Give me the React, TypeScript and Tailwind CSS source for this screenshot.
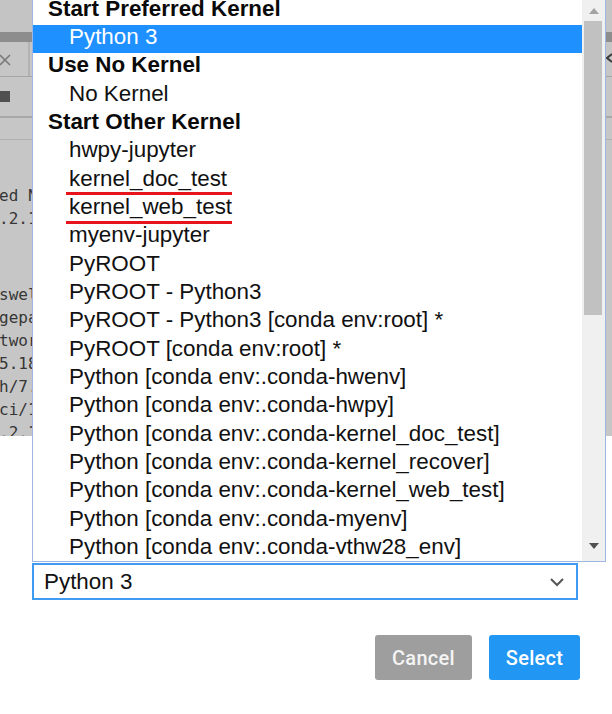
import React from "react";

const items: { label: string; header?: boolean; selected?: boolean; mark?: number }[] = [
  { label: "Start Preferred Kernel", header: true },
  { label: "Python 3", selected: true },
  { label: "Use No Kernel", header: true },
  { label: "No Kernel" },
  { label: "Start Other Kernel", header: true },
  { label: "hwpy-jupyter" },
  { label: "kernel_doc_test", mark: 25 },
  { label: "kernel_web_test", mark: 26 },
  { label: "myenv-jupyter" },
  { label: "PyROOT" },
  { label: "PyROOT - Python3" },
  { label: "PyROOT - Python3 [conda env:root] *" },
  { label: "PyROOT [conda env:root] *" },
  { label: "Python [conda env:.conda-hwenv]" },
  { label: "Python [conda env:.conda-hwpy]" },
  { label: "Python [conda env:.conda-kernel_doc_test]" },
  { label: "Python [conda env:.conda-kernel_recover]" },
  { label: "Python [conda env:.conda-kernel_web_test]" },
  { label: "Python [conda env:.conda-myenv]" },
  { label: "Python [conda env:.conda-vthw28_env]" },
];

export default function App() {
  return (
    <div className="relative w-[612px] h-[714px] overflow-hidden bg-white font-['Liberation_Sans',Arial,sans-serif]">
      {/* page behind the dialog */}
      <div className="h-[436px] bg-[#c6c6c6] flex flex-col overflow-hidden">
        <div className="h-[32px] shrink-0 bg-[#c4c4c4]" />
        <div className="h-[10px] shrink-0 bg-[#8d8d8d]" />
        <div className="h-[35px] shrink-0 flex border-b border-[#a6a6a6]">
          <div className="w-[30px] border-r-2 border-[#b2b2b2] flex items-center pt-[1px]">
            <svg width="14" height="14" viewBox="0 0 14 14" className="-ml-[2px]">
              <path d="M2 2 L12 12 M12 2 L2 12" stroke="#7a7a7a" strokeWidth="1.6" />
            </svg>
          </div>
          <div className="flex-1" />
          <div className="w-[6px] overflow-hidden flex items-center pb-[2px]">
            <svg width="10" height="10" viewBox="0 0 10 10" className="shrink-0">
              <path d="M6 1 L1 5 L6 9" stroke="#3a3a3a" strokeWidth="2" fill="none" />
            </svg>
          </div>
        </div>
        <div className="h-[41px] shrink-0 flex items-center border-b-2 border-[#a9a9a9]">
          <div className="w-[10px] h-[11px] bg-[#505050]" />
        </div>
        <div className="h-[22px] shrink-0 border-b border-[#b0b0b0]" />
        <div className="flex-1 font-['DejaVu_Sans_Mono',monospace] text-[16px] leading-[23px] text-[#363636] -ml-[1px] pt-[44px]">
          <div>ed Nodes</div>
          <div>.2.1</div>
          <div className="mt-[53px]">swell</div>
          <div>gepath</div>
          <div>twork</div>
          <div>5.18</div>
          <div>h/7.1</div>
          <div>ci/1.2</div>
          <div>.2.1</div>
        </div>
      </div>

      {/* dialog body */}
      <div className="pt-[127px]">
        <div className="ml-[32px] w-[546px] h-[37px] border-2 border-[#3f9cf2] flex items-center pl-[10px] pr-[10px] bg-white">
          <span className="flex-1 text-[22.4px] leading-[24px] text-[#111]">Python 3</span>
          <svg width="16" height="10" viewBox="0 0 16 10" className="mr-[1px]">
            <path d="M2 2 L8 8 L14 2" stroke="#555" strokeWidth="2" fill="none" />
          </svg>
        </div>
        <div className="flex justify-end gap-[17px] pr-[32px] mt-[35px] font-['Roboto',sans-serif]">
          <button className="w-[97px] h-[45px] rounded-[3px] bg-[#9e9e9e] text-[20px] font-medium text-[#f4f4f4] tracking-[0.3px]">
            Cancel
          </button>
          <button className="w-[91px] h-[45px] rounded-[3px] bg-[#2196f3] text-[20px] font-medium text-white tracking-[0.3px]">
            Select
          </button>
        </div>
      </div>

      {/* opened select list overlay */}
      <div className="absolute left-[32px] top-0 w-[574px] h-[562px] bg-white border-l border-r border-b border-[#9fb6e0] flex overflow-hidden">
        <div className="flex-1 overflow-hidden">
          <div className="-mt-[3.33px]">
            {items.map((it, i) => (
              <div
                key={i}
                className={
                  "relative h-[28.33px] text-[22.4px] leading-[24px] whitespace-nowrap " +
                  (it.header
                    ? "pl-[15px] font-bold text-[#0a0a0a]"
                    : it.selected
                    ? "pl-[36px] bg-[#1e90ff] text-white"
                    : "pl-[36px] text-[#111]")
                }
              >
                {it.label}
                {it.mark !== undefined && (
                  <div
                    className="absolute left-[33px] w-[166px] h-[3px] bg-[#e8141c]"
                    style={{ top: it.mark }}
                  />
                )}
              </div>
            ))}
          </div>
        </div>
        <div className="w-[23px] bg-[#f0f0f0] flex flex-col">
          <div className="h-[21px] flex items-center justify-center pl-[1px]">
            <svg width="10" height="6" viewBox="0 0 10 6">
              <path d="M0 6 L5 0 L10 6 Z" fill="#a3a3a3" />
            </svg>
          </div>
          <div className="ml-[2px] w-[18px] h-[294px] bg-[#c1c1c1]" />
          <div className="flex-1" />
          <div className="h-[28px] flex items-center justify-center pl-[1px] pb-[3px]">
            <svg width="10" height="6" viewBox="0 0 10 6">
              <path d="M0 0 L10 0 L5 6 Z" fill="#505050" />
            </svg>
          </div>
        </div>
      </div>
    </div>
  );
}
